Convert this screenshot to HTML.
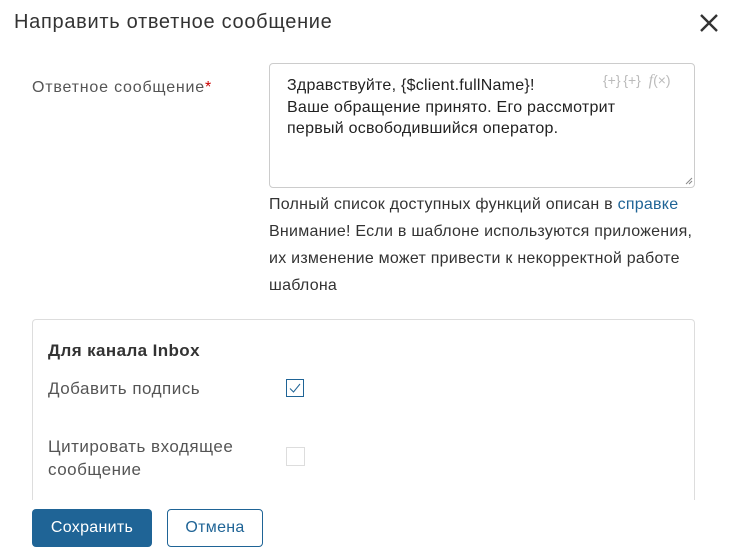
<!DOCTYPE html>
<html><head><meta charset="utf-8"><style>
body{margin:0;width:729px;height:556px;background:#fff;font-family:"Liberation Sans",sans-serif;color:#333;position:relative;overflow:hidden}
.a{position:absolute;white-space:nowrap}
</style></head><body>
<div class="a" style="left:14px;top:11px;font-size:20px;letter-spacing:0.7px;color:#333">Направить ответное сообщение</div>
<svg class="a" style="left:699px;top:13px" width="20" height="20" viewBox="0 0 20 20"><path d="M2 2L18 18M18 2L2 18" stroke="#333" stroke-width="2.4"/></svg>
<div class="a" style="left:32px;top:79px;font-size:16px;letter-spacing:0.8px;color:#555">Ответное сообщение<span style="color:#c00">*</span></div>
<div class="a" style="left:269px;top:63px;width:424px;height:123px;border:1px solid #ccc;border-radius:4px"></div>
<div class="a" style="left:287px;top:75px;font-size:16px;letter-spacing:0.25px;line-height:21.5px;color:#222">Здравствуйте, {$client.fullName}!<br>Ваше обращение принято. Его рассмотрит<br>первый освободившийся оператор.</div>
<div class="a" style="left:603px;top:72px;font-size:14px;color:#bbb">{+}&thinsp;{+}&nbsp; <i style="font-family:'Liberation Serif',serif;font-size:16px">f</i>(×)</div>
<svg class="a" style="left:685px;top:177px" width="8" height="8"><path d="M1 7L7 1M4 7L7 4" stroke="#888"/></svg>
<div class="a" style="left:269px;top:191px;font-size:16px;letter-spacing:0.25px;line-height:27px;color:#333">Полный список доступных функций описан в <span style="color:#1f6496">справке</span><br>Внимание! Если в шаблоне используются приложения,<br>их изменение может привести к некорректной работе<br>шаблона</div>
<div class="a" style="left:32px;top:319px;width:661px;height:180px;border:1px solid #ddd;border-bottom:none;border-radius:4px 4px 0 0"></div>
<div class="a" style="left:48px;top:341px;font-size:17px;letter-spacing:0.4px;font-weight:bold;color:#333">Для канала Inbox</div>
<div class="a" style="left:48px;top:379px;font-size:17px;letter-spacing:0.5px;color:#555">Добавить подпись</div>
<div class="a" style="left:286px;top:379px;width:18px;height:18px;border:1px solid #1f6496;box-sizing:border-box"></div>
<svg class="a" style="left:286px;top:379px" width="18" height="18"><path d="M4 9.5L7.5 13L14 5" stroke="#1f6496" fill="none" stroke-width="1"/></svg>
<div class="a" style="left:48px;top:435px;font-size:17px;letter-spacing:0.5px;line-height:23px;color:#555">Цитировать входящее<br>сообщение</div>
<div class="a" style="left:286px;top:447px;width:19px;height:19px;border:1px solid #ddd;box-sizing:border-box"></div>
<div class="a" style="left:32px;top:509px;width:120px;height:38px;background:#1f6496;border-radius:4px;color:#fff;font-size:16px;letter-spacing:0.3px;line-height:38px;text-align:center">Сохранить</div>
<div class="a" style="left:167px;top:509px;width:96px;height:38px;box-sizing:border-box;border:1px solid #1f6496;border-radius:4px;color:#1f6496;font-size:16px;letter-spacing:0.3px;line-height:36px;text-align:center">Отмена</div>
</body></html>
